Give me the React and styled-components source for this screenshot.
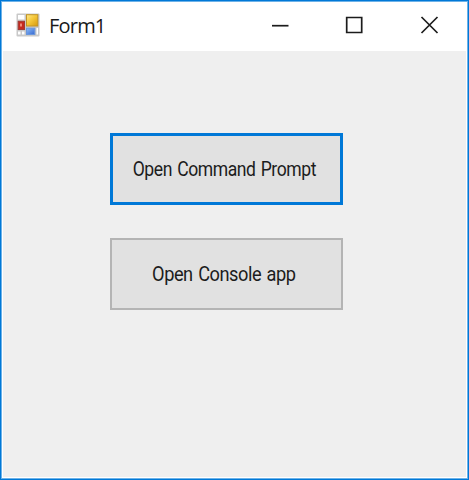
import styled, { createGlobalStyle } from "styled-components";

const GlobalStyle = createGlobalStyle`
  * {
    box-sizing: border-box;
  }
  body {
    margin: 0;
    overflow: hidden;
  }
`;

const Window = styled.div`
  display: flex;
  flex-direction: column;
  width: 469px;
  height: 480px;
  border: 1px solid #0078d7;
  background-color: #fff;
  box-shadow: inset 0 0 0 1px #6db2e8;
`;

const TitleBar = styled.header`
  display: flex;
  align-items: center;
  height: 50px;
  padding: 0 29px 2px 15px;
`;

const Title = styled.h1`
  flex: 1;
  margin: 2px 0 0 9px;
  color: #1a1a1a;
  font: 400 20px/28px "Open Sans", "Noto Sans", sans-serif;
  letter-spacing: -0.8px;
`;

const Controls = styled.div`
  display: flex;
  gap: 56px;
`;

const Control = styled.button`
  display: flex;
  width: 19px;
  height: 19px;
  padding: 0;
  border: none;
  background: none;
`;

const Body = styled.main`
  display: flex;
  flex: 1;
  flex-direction: column;
  align-items: flex-start;
  gap: 33px;
  margin: 0 2px 2px;
  padding: 82px 0 0 107px;
  background-color: #efefef;
`;

const FormButton = styled.button`
  display: flex;
  align-items: center;
  justify-content: center;
  width: 233px;
  height: 72px;
  padding: 0 5px 1px 0;
  border: ${({ $focused }) => ($focused ? "3px solid #0078d7" : "2px solid #b4b4b4")};
  background-color: #e1e1e1;
  color: #1c1c1c;
  font: 400 20px/24px Roboto, "Liberation Sans", sans-serif;
  letter-spacing: -0.5px;
  word-spacing: 1.5px;
  white-space: nowrap;
`;

const Label = styled.span`
  transform: scaleX(${({ $stretch }) => $stretch});
`;

const FormIcon = () => (
  <svg width="24" height="24" viewBox="0 0 24 24">
    <defs>
      <linearGradient id="gold" x1="0" y1="0" x2="1" y2="1">
        <stop offset="0" stopColor="#ffe98c" />
        <stop offset="0.45" stopColor="#f5c83a" />
        <stop offset="1" stopColor="#d79a0c" />
      </linearGradient>
      <linearGradient id="blue" x1="0" y1="0" x2="1" y2="1">
        <stop offset="0" stopColor="#8dbcf8" />
        <stop offset="1" stopColor="#3568d0" />
      </linearGradient>
    </defs>
    <rect x="0.5" y="0.5" width="23" height="23" rx="1" fill="#c9c9c9" />
    <path d="M2 2h6.500v4.500H2zM2 18.500h2.500v3H2zM6 18.500h2.500v3H6zM20.500 15h1.500v6.500h-1.500z" fill="#fff" />
    <rect x="10.500" y="1.700" width="11.300" height="11.300" fill="url(#gold)" stroke="#c39424" />
    <rect x="2.200" y="8.300" width="6.300" height="8.200" fill="#c52a1e" stroke="#a03a34" />
    <rect x="4" y="10.500" width="2" height="3" fill="#ee8877" />
    <rect x="10.500" y="15.200" width="8.300" height="6.300" fill="url(#blue)" stroke="#6a96dc" />
  </svg>
);

const ControlIcon = ({ d }) => (
  <svg width="19" height="19" viewBox="0 0 19 19" fill="none" stroke="#1c1c1c" strokeWidth="1.7">
    <path d={d} />
  </svg>
);

const controls = [
  { name: "Minimize", d: "M2 9.700h16.500" },
  { name: "Maximize", d: "M1.700 1.500h15v15h-15z" },
  { name: "Close", d: "M1.500 1l16 16M17.500 1l-16 16" },
];

const buttons = [
  { label: "Open Command Prompt", focused: true, stretch: 0.878 },
  { label: "Open Console app", focused: false, stretch: 0.91 },
];

const App = () => {
  return (
    <>
      <GlobalStyle />
      <Window>
        <TitleBar>
          <FormIcon />
          <Title>Form1</Title>
          <Controls>
            {controls.map(({ name, d }) => (
              <Control key={name} aria-label={name}>
                <ControlIcon d={d} />
              </Control>
            ))}
          </Controls>
        </TitleBar>
        <Body>
          {buttons.map(({ label, focused, stretch }) => (
            <FormButton key={label} $focused={focused}>
              <Label $stretch={stretch}>{label}</Label>
            </FormButton>
          ))}
        </Body>
      </Window>
    </>
  );
};

export default App;
